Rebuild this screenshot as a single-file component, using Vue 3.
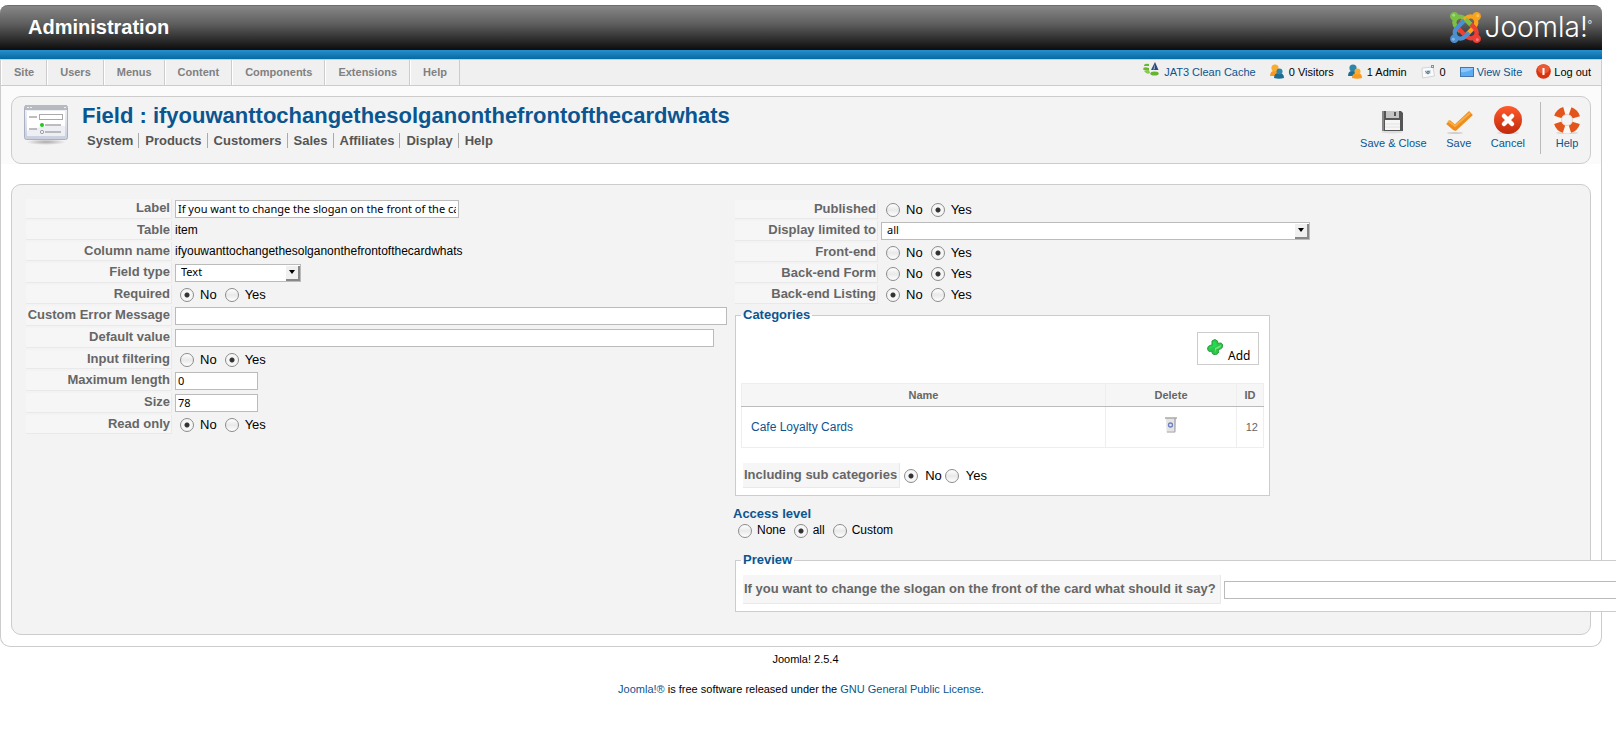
<script setup>
import { ref } from 'vue'

const menu = ['Site', 'Users', 'Menus', 'Content', 'Components', 'Extensions', 'Help']
const submenu = ['System', 'Products', 'Customers', 'Sales', 'Affiliates', 'Display', 'Help']
const yesNo = ['No', 'Yes']

const question = 'If you want to change the slogan on the front of the card what should it say?'
const columnName = 'ifyouwanttochangethesolganonthefrontofthecardwhats'

const fields = ref([
  { id: 'label', label: 'Label', type: 'input', size: 'medium', value: question },
  { id: 'table', label: 'Table', type: 'text', value: 'item' },
  { id: 'column', label: 'Column name', type: 'text', value: columnName },
  { id: 'type', label: 'Field type', type: 'select', size: 'short', value: 'Text' },
  { id: 'required', label: 'Required', type: 'radio', value: 'No' },
  { id: 'error', label: 'Custom Error Message', type: 'input', size: 'full', value: '' },
  { id: 'default', label: 'Default value', type: 'input', size: 'wide', value: '' },
  { id: 'filter', label: 'Input filtering', type: 'radio', value: 'Yes' },
  { id: 'maxlength', label: 'Maximum length', type: 'input', size: 'tiny', value: '0' },
  { id: 'size', label: 'Size', type: 'input', size: 'tiny', value: '78' },
  { id: 'readonly', label: 'Read only', type: 'radio', value: 'No' },
])

const display = ref([
  { id: 'published', label: 'Published', type: 'radio', value: 'Yes' },
  { id: 'limited', label: 'Display limited to', type: 'select', size: 'long', value: 'all' },
  { id: 'front', label: 'Front-end', type: 'radio', value: 'Yes' },
  { id: 'backform', label: 'Back-end Form', type: 'radio', value: 'Yes' },
  { id: 'backlist', label: 'Back-end Listing', type: 'radio', value: 'No' },
])

const columns = [
  { name: 'left', rows: fields },
  { name: 'right', rows: display },
]

const subcategories = ref('No')
const access = ref('all')
const answer = ref('')

const arms = [
  { color: '#7ac043', angle: 0 },
  { color: '#f9a21a', angle: 90 },
  { color: '#ef3e36', angle: 180 },
  { color: '#4c8fd0', angle: 270 },
]
</script>

<template>
  <div class="page">
    <div class="frame">
      <header class="brand">
        <h1>Administration</h1>
        <a class="logo" href="#" aria-label="Joomla!">
          <svg width="31" height="31" viewBox="0 0 30 30">
            <g v-for="arm in arms" :key="arm.angle" :transform="`rotate(${arm.angle} 15 15)`">
              <path d="M10 18.500 L6.500 15 C3.500 12 3.500 8 6 6 C9 3.500 12.500 4.500 15 7 L22 14" fill="none" :stroke="arm.color" stroke-width="4.200" />
              <circle cx="4.200" cy="4.200" r="4.100" :fill="arm.color" />
              <circle cx="3.600" cy="3.200" r="1.400" fill="#fff" opacity=".35" />
            </g>
            <path d="M15 7 L20 12" stroke="#7ac043" stroke-width="4.200" />
          </svg>
          <span class="wordmark">Joomla!</span><span class="dot">°</span>
        </a>
      </header>
      <div class="stripe"></div>

      <div class="bar">
        <nav class="menu">
          <a v-for="m in menu" :key="m" href="#">{{ m }}</a>
        </nav>
        <div class="status">
          <a href="#">
            <svg class="tall" width="16" height="20" viewBox="0 0 16 20">
              <path d="M12 0 L15.500 8 H8 Z" fill="#2c4b7c" /><path d="M12 2 L12 7 L10 8Z" fill="#8ca3c6" />
              <path d="M6 2 Q1 1 1 4 H6 M6 6 Q0 4 0 7.500 Q2 9 6 8.500" fill="#6aba2f" />
              <path d="M1 9 Q4 13 7 11 L6 8 Z" fill="#84cc45" />
              <ellipse cx="11.500" cy="11.500" rx="4.200" ry="2" fill="#62b52d" />
            </svg>
            JAT3 Clean Cache
          </a>
          <span>
            <svg width="15" height="15" viewBox="0 0 15 15">
              <path d="M0 12 Q0 7 4 7 H7 V12Z" fill="#f79a1e" /><circle cx="5" cy="4" r="3.600" fill="#fbab30" />
              <path d="M4 14 Q4 9 9 9 Q14 9 14 14 Q9 15.500 4 14Z" fill="#1f6d92" /><circle cx="9.500" cy="7.500" r="3" fill="#2f86a9" />
            </svg>
            0 Visitors
          </span>
          <span>
            <svg width="15" height="15" viewBox="0 0 15 15">
              <path d="M0 12 Q0 7 4 7 H7 V12Z" fill="#1f6d92" /><circle cx="5" cy="4" r="3.600" fill="#2f86a9" />
              <path d="M4 14 Q4 9 9 9 Q14 9 14 14 Q9 15.500 4 14Z" fill="#f79a1e" /><circle cx="9.500" cy="7.500" r="3" fill="#fbab30" />
            </svg>
            1 Admin
          </span>
          <span>
            <svg width="15" height="15" viewBox="0 0 15 15">
              <path d="M1 4 L12 3 L13.500 12 L1.500 14Z" fill="#fafafa" stroke="#d2d4d6" />
              <path d="M4 6.500 L10 6 V9.500 L4 10Z" fill="#cfdde6" />
              <path d="M4 7 L6 9 L9 7" fill="none" stroke="#7f97a8" />
              <circle cx="7" cy="8.500" r="1.300" fill="none" stroke="#4e7b96" />
              <rect x="10.500" y="1.500" width="2" height="2" fill="#d9ecf7" stroke="#5aa0cb" />
            </svg>
            0
          </span>
          <a href="#">
            <svg width="14" height="15" viewBox="0 0 14 15">
              <rect x=".5" y="3.500" width="13" height="9" fill="#5cacf5" stroke="#4578a8" />
              <path d="M1 8 Q7 9 13 5 V4 H1Z" fill="#8cc8fb" />
            </svg>
            View Site
          </a>
          <a class="plain" href="#">
            <svg width="15" height="15" viewBox="0 0 15 15">
              <circle cx="7.500" cy="7.500" r="7.300" fill="#d8340d" /><ellipse cx="7.500" cy="5" rx="6" ry="4.500" fill="#ec5834" />
              <rect x="6.500" y="4" width="2" height="7" fill="#fff" />
            </svg>
            Log out
          </a>
        </div>
      </div>

      <div class="titlewrap">
        <section class="panel titlebar">
          <svg class="formicon" width="46" height="42" viewBox="0 0 46 42">
            <defs>
              <linearGradient id="win" x1="0" y1="0" x2="0" y2="1"><stop offset="0" stop-color="#f4f4f6" /><stop offset="1" stop-color="#c9cede" /></linearGradient>
              <radialGradient id="shade"><stop offset="0" stop-color="#aaa" /><stop offset="1" stop-color="#aaa" stop-opacity="0" /></radialGradient>
            </defs>
            <ellipse cx="23" cy="38" rx="20" ry="3" fill="url(#shade)" />
            <rect x="1.500" y="1.500" width="43" height="34" rx="2" fill="url(#win)" stroke="#aab0c2" />
            <rect x="2" y="1" width="42" height="5" fill="#b7bac1" />
            <path d="M4 3.500 H6 M7 3.500 H9 M41 3.500 H43" stroke="#eee" />
            <path d="M4 7 H42 V22 Q24 21 4 27Z" fill="#fff" /><path d="M4 27 Q24 20 42 22 V32 H4Z" fill="#edeff5" />
            <path d="M6 13 H14 M6 25 H14 M22 21 H38 M22 28 H38" stroke="#a9a9a9" stroke-width="1.600" />
            <rect x="16.500" y="10.500" width="23" height="5" fill="#fff" stroke="#aaa" />
            <circle cx="19" cy="21" r="2" fill="#20c820" /><circle cx="19" cy="28" r="1.600" fill="#fff" stroke="#999" />
          </svg>
          <div class="headings">
            <h2>Field : {{ columnName }}</h2>
            <nav class="submenu">
              <a v-for="s in submenu" :key="s" href="#">{{ s }}</a>
            </nav>
          </div>
          <div class="tools">
            <a href="#">
              <svg width="32" height="32" viewBox="0 0 32 32">
                <ellipse cx="15" cy="30" rx="11" ry="1.500" fill="#ddd" />
                <path d="M5 9 H24 L26 11 V29 H5Z" fill="#555" /><path d="M5 9 H7 V29 H5Z" fill="#888" />
                <rect x="9" y="9" width="13" height="7" fill="#c4c4c4" /><rect x="17" y="10" width="2" height="4" fill="#555" />
                <rect x="8" y="18" width="15" height="10" fill="#f6f6f6" /><path d="M8 22 H23 M8 25 H23" stroke="#e2e2e2" />
              </svg>
              Save &amp; Close
            </a>
            <a href="#">
              <svg width="32" height="32" viewBox="0 0 32 32">
                <ellipse cx="12" cy="31" rx="8" ry="1" fill="#d0d0d0" />
                <path d="M5 20 L12 26 L28 11" fill="none" stroke="#ee8c1c" stroke-width="5.500" stroke-linejoin="round" />
                <path d="M5 19 L12 24 L27 11" fill="none" stroke="#f9ad45" stroke-width="2" />
              </svg>
              Save
            </a>
            <a href="#">
              <svg width="32" height="32" viewBox="0 0 32 32">
                <defs><linearGradient id="red" x1="0" y1="0" x2="0" y2="1"><stop offset="0" stop-color="#ff5a2c" /><stop offset="1" stop-color="#c02a0c" /></linearGradient></defs>
                <ellipse cx="16" cy="31" rx="11" ry="1" fill="#d8d8d8" />
                <circle cx="16" cy="18" r="14" fill="url(#red)" />
                <path d="M12 14 L20 22 M20 14 L12 22" stroke="#fff" stroke-width="4.500" stroke-linecap="round" />
              </svg>
              Cancel
            </a>
            <i class="divider"></i>
            <a href="#">
              <svg width="32" height="32" viewBox="0 0 32 32">
                <ellipse cx="16" cy="31" rx="11" ry="1" fill="#d4d4d4" />
                <circle cx="16" cy="18" r="9.500" fill="none" stroke="#fbf6f2" stroke-width="8" />
                <circle cx="16" cy="18" r="9.500" fill="none" stroke="#e2561c" stroke-width="8" stroke-dasharray="9 5.923" stroke-dashoffset="-2.900" />
                <circle cx="16" cy="18" r="5.500" fill="#f3f3f3" stroke="#e3d4cb" />
              </svg>
              Help
            </a>
          </div>
        </section>
      </div>

      <main>
        <form class="panel editor" @submit.prevent>
          <div v-for="col in columns" :key="col.name" :class="['col', col.name]">
            <div v-for="f in col.rows.value" :key="f.id" :class="['row', f.type]">
              <component :is="f.type === 'input' || f.type === 'select' ? 'label' : 'span'" :id="'t-' + f.id" class="key" :for="f.type === 'input' || f.type === 'select' ? f.id : null">{{ f.label }}</component>
              <input v-if="f.type === 'input'" :id="f.id" v-model="f.value" type="text" :class="['box', f.size]">
              <span v-else-if="f.type === 'select'" :class="['pick', f.size]">
                <select :id="f.id" v-model="f.value"><option>{{ f.value }}</option></select>
                <i class="arrow"></i>
              </span>
              <span v-else-if="f.type === 'radio'" class="radios" role="radiogroup" :aria-labelledby="'t-' + f.id">
                <label v-for="o in yesNo" :key="o"><input v-model="f.value" type="radio" :name="f.id" :value="o">{{ o }}</label>
              </span>
              <span v-else class="value">{{ f.value }}</span>
            </div>

            <template v-if="col.name === 'right'">
              <fieldset class="categories">
                <legend>Categories</legend>
                <div class="addline">
                  <button type="button">
                    <svg width="16" height="16" viewBox="0 0 16 16">
                      <path d="M5 2 Q8 -1 10.500 2 L11 4.500 Q15 3 15.500 6 Q16 10 11.500 10.500 Q12.500 15 8.500 15.500 Q4.500 16 5 12 Q1.500 13.500 .7 10.500 Q0 6.500 5 6Z" fill="#2fc54b" stroke="#269c3b" />
                      <path d="M6 3 Q8 1 9 4 L10 7 L5 9 L2 10 Q2 7 6 7Z" fill="#22dc56" /><path d="M8 9 L14 6 Q14 9 9 10 L8 14Z" fill="#74e678" />
                    </svg>
                    Add
                  </button>
                </div>
                <table>
                  <thead>
                    <tr><th>Name</th><th class="del">Delete</th><th class="id">ID</th></tr>
                  </thead>
                  <tbody>
                    <tr>
                      <td><a href="#">Cafe Loyalty Cards</a></td>
                      <td class="del">
                        <button type="button" class="bin" aria-label="Delete">
                          <svg width="12" height="16" viewBox="0 0 12 16">
                            <path d="M1 1 H11 L10.500 15.500 H1.500Z" fill="#e4e4e5" /><path d="M9 1 H11 L10.500 15 H9Z" fill="#b9b9bb" />
                            <path d="M0 1 H12" stroke="#aaa" stroke-width="1.500" /><path d="M2 15 H10" stroke="#aaa" />
                            <circle cx="5.500" cy="8" r="2" fill="none" stroke="#6c80c4" stroke-width="1.300" />
                          </svg>
                        </button>
                      </td>
                      <td class="id">12</td>
                    </tr>
                  </tbody>
                </table>
                <div class="subline">
                  <span id="t-sub" class="key">Including sub categories</span>
                  <span class="radios" role="radiogroup" aria-labelledby="t-sub">
                    <label v-for="o in yesNo" :key="o"><input v-model="subcategories" type="radio" name="sub" :value="o">{{ o }}</label>
                  </span>
                </div>
              </fieldset>

              <fieldset class="access">
                <legend>Access level</legend>
                <div class="radios">
                  <label v-for="o in ['None', 'all', 'Custom']" :key="o"><input v-model="access" type="radio" name="access" :value="o">{{ o }}</label>
                </div>
              </fieldset>

              <fieldset class="preview">
                <legend>Preview</legend>
                <div class="answer">
                  <label class="key" for="answer">{{ question }}</label>
                  <input id="answer" v-model="answer" type="text" class="box full">
                </div>
              </fieldset>
            </template>
          </div>
        </form>
      </main>
    </div>

    <footer>
      <p class="version">Joomla! 2.5.4</p>
      <p><a href="#">Joomla!®</a> is free software released under the <a href="#">GNU General Public License</a>.</p>
    </footer>
  </div>
</template>

<style>
body { margin: 0; background: #fff; }
</style>

<style scoped>
* { box-sizing: border-box; }
.page {
  overflow: hidden;
  padding: 5px 14px 0 0;
  font: 11px/14px Arial, "Liberation Sans", sans-serif;
  color: #000;
}
h1, h2, p { margin: 0; }
a { color: #0b5590; text-decoration: none; }
svg { display: block; flex: none; }
.frame { border: 1px solid #ccc; border-top: 0; border-radius: 8px 8px 10px 10px; }
.brand {
  display: flex; align-items: center; justify-content: space-between;
  height: 45px; margin: 0 -1px; padding: 0 10px 2px 28px;
  border-top: 1px solid #6d6d6d; border-radius: 8px 8px 0 0;
  background: linear-gradient(#878787, #5f5f5f 40%, #0c0c0c);
}
.brand h1 { font-size: 20px; line-height: 24px; color: #fff; }
.logo { display: flex; align-items: center; color: #fff; }
.wordmark { margin-left: 4px; font: 300 28px/30px Inter, sans-serif; }
.dot { height: 34px; font: 10px/28px Lato, sans-serif; }
.stripe { height: 9px; margin: 0 -1px; background: linear-gradient(#2590cd, #0669a2); }
.bar {
  display: flex; justify-content: space-between; height: 27px;
  background: #f0f0f0; border-top: 1px solid #ccc; border-bottom: 1px solid #ccc;
}
.menu { display: flex; }
.menu a {
  padding: 0 12px; line-height: 25px; font-weight: bold; color: #808080;
  border-right: 1px solid #ccc; border-left: 1px solid #fff;
}
.status { display: flex; gap: 14px; padding: 0 10px 2px 0; }
.status > * { display: flex; align-items: center; gap: 3px; white-space: nowrap; }
.status > span { gap: 4px; }
.status .plain { color: #000; }
.status .tall { margin-right: 2px; }
.titlewrap { padding: 10px 10px 0; background: #fbfbfb; }
.panel { background: #f3f3f3; border: 1px solid #ccc; border-radius: 10px; }
.titlebar { display: flex; height: 68px; padding: 5px 7px 0 11px; }
.formicon { margin-top: 2px; }
.headings { flex: 1; padding: 1px 0 0 13px; }
.headings h2 { font-size: 22px; line-height: 26px; color: #0b5590; white-space: nowrap; }
.submenu { display: flex; padding-top: 4px; }
.submenu a {
  padding: 0 5px; font-size: 13px; line-height: 15px; font-weight: bold; color: #555;
  border-right: 1px solid #aaa;
}
.submenu a + a { padding-left: 6px; }
.submenu a:last-child { border-right: 0; }
.tools { display: flex; gap: 16px; }
.tools a { display: flex; flex-direction: column; align-items: center; line-height: 14px; white-space: nowrap; }
.tools svg { margin-bottom: 2px; }
.divider { width: 1px; height: 52px; margin-left: -1px; background: #bbb; }
.divider + a { margin-left: -6px; }
main { padding: 20px 10px 11px; }
.editor { display: flex; gap: 8px; padding: 14px 0 22px 14px; }
.col { display: flex; flex-direction: column; align-items: flex-start; gap: 2px; }
.col.left { flex: none; }
.col.right { flex: 1; min-width: 0; padding-top: 1px; }
.row { display: flex; gap: 3px; height: 19px; font-size: 12px; line-height: 18px; }
.row.input, .row.select { height: 20px; }
.key {
  flex: none; padding: 0 1px; text-align: right; font-size: 13px; line-height: 18px; font-weight: bold;
  color: #666; background: #f6f6f6; border-right: 1px solid #e9e9e9; border-bottom: 1px solid #e9e9e9;
}
.left .row .key { width: 146px; }
.right .row .key { width: 143px; }
.box {
  height: 18px; margin: 1px 0 0; padding: 0 2px 2px; border: 1px solid #bbb; border-radius: 0;
  background: #fff; font: 11px/14px "Noto Sans", sans-serif; color: #000;
}
.full { width: 552px; }
.wide { width: 539px; }
.medium { width: 284px; }
.tiny { width: 83px; }
.short { width: 126px; }
.long { width: 429px; }
.pick { position: relative; height: 18px; margin-top: 1px; }
.pick select {
  display: block; width: 100%; height: 18px; padding: 0 5px 2px; appearance: none;
  border: 1px solid #bbb; border-radius: 0; background: #fff; font: 11px/14px "Noto Sans", sans-serif; color: #000;
}
.arrow {
  position: absolute; right: 1px; top: 2px; width: 14px; height: 15px; pointer-events: none;
  background: #f0f0f0; border: solid #888; border-width: 0 2px 2px 0;
}
.arrow::after {
  content: ""; position: absolute; left: 3px; top: 4px;
  border: 3px solid transparent; border-top: 4px solid #000; border-bottom: 0;
}
.radios { display: flex; gap: 8px; padding-left: 5px; font-size: 13px; line-height: 21px; }
.radios label { display: flex; align-items: center; gap: 6px; }
.radios input {
  width: 14px; height: 14px; margin: 0; appearance: none; border: 1px solid #8c8c8c; border-radius: 50%;
  background: linear-gradient(#fff, #e9e9e9 50%, #fff);
}
.radios input:checked { background: radial-gradient(circle, #333 2px, #f6f6f6 3px); }
fieldset { margin: 0; border: 1px solid #ccc; background: #fff; }
legend { padding: 0 2px; font-size: 13px; line-height: 16px; font-weight: bold; color: #0b5590; }
.categories { width: 535px; margin-top: 1px; padding: 9px 5px 7px; }
.addline { display: flex; justify-content: flex-end; padding: 0 5px 18px 0; }
.addline button {
  display: flex; align-items: flex-start; gap: 5px; width: 62px; height: 33px; padding: 6px 9px 0; overflow: hidden;
  border: 1px solid #ccc; background: #fff; font: 12px/34px "Noto Sans", sans-serif; color: #000;
}
table { width: 100%; border-collapse: collapse; border: 1px solid #eee; color: #666; }
th { height: 23px; padding: 0; font-size: 11px; background: #f6f6f6; border: 1px solid #eee; border-bottom: 1px solid #bbb; }
td { height: 41px; padding: 0 0 0 9px; border: 1px solid #eee; }
td a { font-size: 12px; }
.del { width: 131px; padding: 0; text-align: center; }
.id { width: 27px; }
td.id { padding: 0 5px 0 0; text-align: right; }
.bin { display: block; margin: 0 auto; padding: 0 0 4px; border: 0; background: none; }
.subline { display: flex; padding: 15px 0 0 2px; }
.subline .key { padding: 0 2px 0 1px; line-height: 24px; }
.subline .radios { padding-left: 4px; gap: 3px; line-height: 24px; }
.subline .radios label { gap: 7px; }
.access { margin: 8px 0 0 -2px; padding: 0; border: 0; background: none; }
.access legend { padding: 0; }
.access .radios { padding-left: 5px; font-size: 12px; line-height: 17px; }
.access .radios label { gap: 5px; }
.preview { flex: none; margin-top: 11px; padding: 7px 5px; }
.answer { display: flex; align-items: center; gap: 3px; padding-left: 2px; white-space: nowrap; }
.answer .key { padding: 0 4px 0 1px; line-height: 28px; }
.answer .box { flex: none; margin: 0; }
footer { padding-top: 5px; text-align: center; }
footer p { margin-bottom: 16px; }
.version { padding-left: 9px; }
</style>
